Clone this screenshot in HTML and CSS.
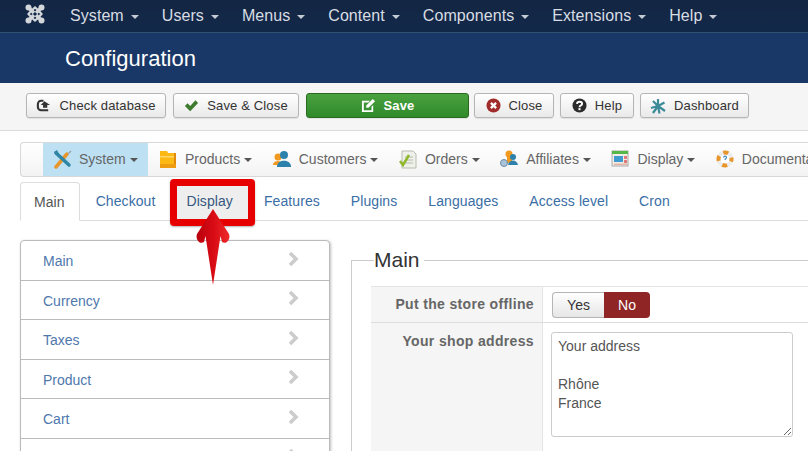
FILE: index.html
```html
<!DOCTYPE html>
<html lang="en">
<head>
<meta charset="utf-8">
<title>Configuration</title>
<link rel="stylesheet" href="styles.css">
</head>
<body>
<nav class="topbar">
  <svg class="logo" viewBox="0 0 20 20" width="20" height="20"><g fill="none" stroke="#d3d6da" stroke-width="3.6" stroke-linecap="round"><path d="M4 4 16 16M16 4 4 16"/><path d="M6.500 6.500 10 3.500 13.500 6.500 16.500 10 13.500 13.500 10 16.500 6.500 13.500 3.500 10Z" stroke-width="2.200"/></g><g fill="#d3d6da"><circle cx="3.500" cy="3.500" r="3"/><circle cx="16.500" cy="3.500" r="3"/><circle cx="3.500" cy="16.500" r="3"/><circle cx="16.500" cy="16.500" r="3"/></g><rect x="8.500" y="8.500" width="3" height="3" fill="#13294a" transform="rotate(45 10 10)"/></svg>
  <a class="topitem">System<i class="caret"></i></a>
  <a class="topitem">Users<i class="caret"></i></a>
  <a class="topitem">Menus<i class="caret"></i></a>
  <a class="topitem">Content<i class="caret"></i></a>
  <a class="topitem">Components<i class="caret"></i></a>
  <a class="topitem">Extensions<i class="caret"></i></a>
  <a class="topitem">Help<i class="caret"></i></a>
</nav>
<header class="titlebar"><h1>Configuration</h1></header>
<div class="toolbar">
  <button class="btn b-check"><svg viewBox="0 0 16 16" width="15" height="15"><path d="M8 3H5.500A3.500 3.500 0 0 0 2 6.500v3A3.500 3.500 0 0 0 5.500 13H13" fill="none" stroke="#333" stroke-width="2.200"/><path d="M9 3.500 15 7.500H12V10.500H7.500V7.500H5Z" fill="#333"/></svg>Check database</button>
  <button class="btn b-saveclose"><svg viewBox="0 0 16 16" width="15" height="15"><path d="M1 8.500 3.800 5.700 6.600 8.500 12.200 2.500 15 5.300 6.600 14z" fill="#3c7a2c"/></svg>Save &amp; Close</button>
  <button class="btn btn-green"><svg viewBox="0 0 16 16" width="15" height="15"><path d="M1 3h8.500L7.800 4.800H3V13h8.200V9.200L13 7.500V14.800H1z" fill="#fff"/><path d="M5.500 8 12.500 1 15 3.500 8 10.500H5.500z" fill="#fff"/></svg>Save</button>
  <button class="btn b-close"><svg viewBox="0 0 16 16" width="15" height="15"><circle cx="8" cy="8" r="7.500" fill="#a02c2c"/><path d="M5.200 5.200 10.800 10.800M10.800 5.200 5.200 10.800" stroke="#fff" stroke-width="2.400"/></svg>Close</button>
  <button class="btn b-help"><svg viewBox="0 0 16 16" width="15" height="15"><circle cx="8" cy="8" r="7.500" fill="#2b2b2b"/><path d="M5.300 6.200C5.600 3.300 10.800 3.300 10.800 6.300 10.800 8 8 7.800 8 9.800" fill="none" stroke="#fff" stroke-width="2"/><rect x="6.900" y="10.800" width="2.200" height="2.200" fill="#fff"/></svg>Help</button>
  <button class="btn b-dash"><svg viewBox="0 0 16 16" width="16" height="16"><path d="M8 1V8M8 8 14.500 4.500M8 8 15 13M8 8 9.500 15.500M8 8 3 15M8 8 1 10M8 8 3 3" fill="none" stroke="#3d8a99" stroke-width="2.200"/></svg>Dashboard</button>
</div>

<main class="content">
  <div class="submenu">
    <a class="subitem active"><svg viewBox="0 0 20 20" width="20" height="20"><path d="M3 18 14 5" stroke="#e8962a" stroke-width="3.500" stroke-linecap="round"/><path d="M15 5 18 2" stroke="#9aa5ab" stroke-width="1.500"/><path d="M3 4 16 16" stroke="#2f86a5" stroke-width="3.500" stroke-linecap="round"/><path d="M1 3 4 1 6 5 3 6Z" fill="#2f86a5"/></svg>System<i class="caret dark"></i></a>
    <a class="subitem"><svg viewBox="0 0 18 20" width="18" height="20"><path d="M1 2h7l1 2h8v15H1z" fill="#fdb913"/><rect x="1" y="7" width="16" height="1.500" fill="#fdd56a"/><rect x="15" y="4" width="2" height="15" fill="#e28a0c"/><rect x="1" y="15" width="16" height="4" fill="#ef9d10"/></svg>Products<i class="caret dark"></i></a>
    <a class="subitem"><svg viewBox="0 0 18 20" width="18" height="20"><circle cx="5" cy="8" r="3.500" fill="#f29a1f"/><path d="M0 15c1-4 9-4 10 0v1H0z" fill="#f29a1f"/><circle cx="11" cy="6" r="4" fill="#2d82ad"/><path d="M4 17c1-7 13-7 14 0v1H4z" fill="#2d82ad"/></svg>Customers<i class="caret dark"></i></a>
    <a class="subitem"><svg viewBox="0 0 18 20" width="18" height="20"><path d="M3 2h11l3 3v14H3z" fill="#eef0ea" stroke="#b9bcb0"/><path d="M6 8h8M6 11h8M6 14h8" stroke="#b9bcb0"/><path d="M1 12 4 16 10 6" fill="none" stroke="#8fb82a" stroke-width="2.500"/></svg>Orders<i class="caret dark"></i></a>
    <a class="subitem"><svg viewBox="0 0 18 20" width="18" height="20"><circle cx="9" cy="5" r="3.500" fill="#f29a1f"/><rect x="7" y="7" width="5" height="7" fill="#f29a1f"/><circle cx="13" cy="8" r="3" fill="#2d82ad"/><path d="M8 16c1-6 9-6 10 0z" fill="#2d82ad"/><circle cx="4" cy="14" r="3.500" fill="#a9c4d8" stroke="#6d8ca5"/></svg>Affiliates<i class="caret dark"></i></a>
    <a class="subitem"><svg viewBox="0 0 18 20" width="18" height="20"><rect x="1" y="2" width="16" height="15" fill="#f2eee6" stroke="#a9a9a9"/><rect x="1" y="2" width="16" height="3" fill="#55b748"/><rect x="3" y="7" width="9" height="6" fill="#3f9ad0"/><rect x="13" y="7" width="3" height="3" fill="#e07a7a"/><rect x="13" y="11" width="3" height="3" fill="#e07a7a"/><rect x="3" y="14.500" width="13" height="1.500" fill="#e7b4a8"/></svg>Display<i class="caret dark"></i></a>
    <a class="subitem"><svg viewBox="0 0 18 20" width="18" height="20"><circle cx="9" cy="10" r="6.500" fill="#fff" stroke="#ececec" stroke-width="4"/><circle cx="9" cy="10" r="6.500" fill="none" stroke="#e8962a" stroke-width="4" stroke-dasharray="5.100 5.100" stroke-dashoffset="2.500"/><path d="M7.500 8.500c.5-2 3-1.500 3 0 0 1-1.500 1-1.500 2.500" fill="none" stroke="#4a8fc0" stroke-width="1.300"/></svg>Documentation</a>
  </div>

  <div class="tabs">
    <a class="tab tab-active">Main</a>
    <a class="tab">Checkout</a>
    <a class="tab tab-display">Display</a>
    <a class="tab">Features</a>
    <a class="tab">Plugins</a>
    <a class="tab">Languages</a>
    <a class="tab">Access level</a>
    <a class="tab">Cron</a>
  </div>

  <div class="panes">
    <ul class="sidenav">
      <li><a>Main</a><svg class="chev" viewBox="0 0 12 16" width="12" height="16"><path d="M2 2 8 8 2 14" fill="none" stroke="#ccc" stroke-width="3.600"/></svg></li>
      <li><a>Currency</a><svg class="chev" viewBox="0 0 12 16" width="12" height="16"><path d="M2 2 8 8 2 14" fill="none" stroke="#ccc" stroke-width="3.600"/></svg></li>
      <li><a>Taxes</a><svg class="chev" viewBox="0 0 12 16" width="12" height="16"><path d="M2 2 8 8 2 14" fill="none" stroke="#ccc" stroke-width="3.600"/></svg></li>
      <li><a>Product</a><svg class="chev" viewBox="0 0 12 16" width="12" height="16"><path d="M2 2 8 8 2 14" fill="none" stroke="#ccc" stroke-width="3.600"/></svg></li>
      <li><a>Cart</a><svg class="chev" viewBox="0 0 12 16" width="12" height="16"><path d="M2 2 8 8 2 14" fill="none" stroke="#ccc" stroke-width="3.600"/></svg></li>
      <li><svg class="chev end" viewBox="0 0 12 16" width="12" height="16"><path d="M2 2 8 8 2 14" fill="none" stroke="#ccc" stroke-width="3.600"/></svg></li>
    </ul>
    <fieldset class="settings">
      <legend>Main</legend>
      <div class="formrow first">
        <div class="label">Put the store offline</div>
        <div class="field"><div class="toggle"><span class="yes">Yes</span><span class="no">No</span></div></div>
      </div>
      <div class="formrow last">
        <div class="label">Your shop address</div>
        <div class="field"><textarea class="address" readonly>Your address

Rhône
France</textarea></div>
      </div>
    </fieldset>
  </div>

  <div class="highlight"></div>
  <svg class="arrow" viewBox="0 0 36 76" width="36" height="76"><defs><linearGradient id="ag" x1="0" x2="1" y1="0" y2="0"><stop offset="0" stop-color="#b8000c"/><stop offset="0.5" stop-color="#d80b14"/><stop offset="1" stop-color="#ee2a2a"/></linearGradient></defs><path d="M18 0 34 25C36 30 31 36 27 33L25.500 27 18 76 10.500 27 9 33C5 36 0 30 2 25Z" fill="url(#ag)"/></svg>
</main>
</body>
</html>
```
FILE: styles.css
```css
* { box-sizing: border-box; }
html, body { margin: 0; padding: 0; height: 451px; overflow: hidden; background: #fff; }
body { font-family: "Liberation Sans", Arial, sans-serif; color: #555; }

.topbar {
  height: 33px; display: flex; align-items: center; padding-left: 25px;
  background: linear-gradient(#132643, #13294a);
  border-bottom: 1px solid #34506f;
}
.logo { flex: none; margin-right: 25px; margin-top: -4px; }
.topitem { display: flex; align-items: center; font-size: 16px; letter-spacing: .07px; color: #d8dde3; margin-right: 23px; white-space: nowrap; }
.caret { display: inline-block; width: 0; height: 0; margin-left: 7px; margin-top: 2px; border: 4px solid transparent; border-top-color: #c6ccd4; border-bottom-width: 0; }
.caret.dark { border-top-color: #555; }

.titlebar { height: 50px; background: #1a3867; padding: 0 0 0 65px; display: flex; align-items: center; }
.titlebar h1 { margin: 0 0 -1px; font-size: 22px; font-weight: 400; color: #fff; }

.toolbar { height: 48px; display: flex; background: #f5f5f5; border-bottom: 1px solid #ddd; padding: 10px 0 0 26px; }
.btn {
  height: 25px; display: flex; align-items: center; justify-content: center; gap: 8px; padding: 0; margin-right: 7px;
  font: 13px "Liberation Sans", Arial, sans-serif; letter-spacing: .15px; color: #333; border: 1px solid #b5b5b5; border-radius: 3px;
  background: linear-gradient(#fff, #e9e9e9); box-shadow: 0 1px 1px rgba(0,0,0,.08);
}
.b-check { width: 140px; }
.b-saveclose { width: 126px; }
.btn-green { width: 163px; margin-right: 5px; color: #fff; font-weight: 700; border-color: #2a6b1f; background: linear-gradient(#4aa13f, #2f8a2a); }
.b-close { width: 80px; margin-right: 6px; }
.b-help { width: 74px; margin-right: 6px; }
.b-dash { width: 109px; }

.content { position: relative; padding: 11px 0 0 20px; }

.submenu {
  height: 35px; display: flex; align-items: stretch; padding-left: 22px;
  border: 1px solid #d8d8d8; border-right: 0; border-radius: 4px 0 0 4px;
  background: linear-gradient(#fff, #f3f3f3); white-space: nowrap;
}
.subitem { display: flex; align-items: center; gap: 8px; padding: 0 9.500px 2px 11px; font-size: 14px; color: #666; }
.subitem .caret { margin-left: -4px; }
.subitem.active { flex: none; background: #bde0f3; padding: 0 0 2px 10px; width: 105px; gap: 6px; }
.subitem.active .caret { margin-left: -2px; }

.tabs { height: 39px; margin-top: 5px; display: flex; align-items: stretch; border-bottom: 1px solid #ddd; }
.tab { display: flex; align-items: center; padding: 0 15.5px; font-size: 14px; letter-spacing: .08px; color: #3a6ea5; white-space: nowrap; }
.tab-active { color: #555; padding: 0 14px 0 13px; margin: 0 .5px -1px 0; background: #fff; border: 1px solid #ddd; border-bottom-color: #fff; border-radius: 4px 4px 0 0; }
.tab-display { color: #36577f; background: #eee; }

.panes { display: flex; padding-top: 19px; }
.sidenav {
  flex: none; width: 310px; margin: 0; padding: 0; list-style: none; background: #fff;
  border: 1px solid #bbb; border-radius: 4px 4px 0 0; box-shadow: 1px 1px 3px rgba(0,0,0,.25);
}
.sidenav li { height: 39.500px; display: flex; align-items: center; justify-content: space-between; padding: 2px 29px 0 22px; border-bottom: 1px solid #bbb; font-size: 14px; color: #4f78ad; }
.chev { margin-top: -5px; }
.chev.end { margin-left: auto; }

.settings { flex: none; width: 600px; margin: 8px 0 0 21px; padding: 0 0 0 19px; border: 1px solid #ccc; border-right: 0; border-bottom: 0; min-inline-size: 0; }
.settings legend { margin: 0 0 0 3px; padding: 0 4px 0 0; font-size: 21px; color: #333; line-height: 24px; }
.formrow { display: flex; border-bottom: 1px solid #ddd; }
.formrow.first { border-top: 1px solid #e4e4e4; margin-top: 14px; }
.formrow.last { min-height: 150px; border-bottom: 0; }
.formrow.last .label { padding-top: 10px; }
.label { flex: none; width: 172px; padding: 9px 8px 0 0; text-align: right; font-size: 14px; font-weight: 700; letter-spacing: .34px; color: #666; background: #f5f5f5; border-right: 1px solid #e4e4e4; }
.field { padding: 5px 0 4px 9px; }
.toggle { display: flex; width: 98px; height: 26px; font-size: 14px; }
.toggle span { display: flex; align-items: center; justify-content: center; }
.yes { width: 52px; color: #333; border: 1px solid #b5b5b5; border-right: 0; border-radius: 4px 0 0 4px; background: linear-gradient(#fff, #e6e6e6); }
.no { width: 46px; color: #fff; background: #8f2525; border-radius: 0 4px 4px 0; }
.address { display: block; width: 242px; height: 105px; margin: 4px 0 0 -1px; padding: 4px 6px; font: 14px/19px "Liberation Sans", Arial, sans-serif; color: #555; background: #fff; border: 1px solid #ccc; border-radius: 3px; outline: 0; }

.highlight { position: absolute; left: 170px; top: 48px; width: 85px; height: 47px; border: 7px solid #e60000; border-radius: 4px; box-shadow: 0 1px 2px rgba(0,0,0,.3); }
.arrow { position: absolute; left: 195px; top: 78px; width: 36px; height: 76px; }
```
